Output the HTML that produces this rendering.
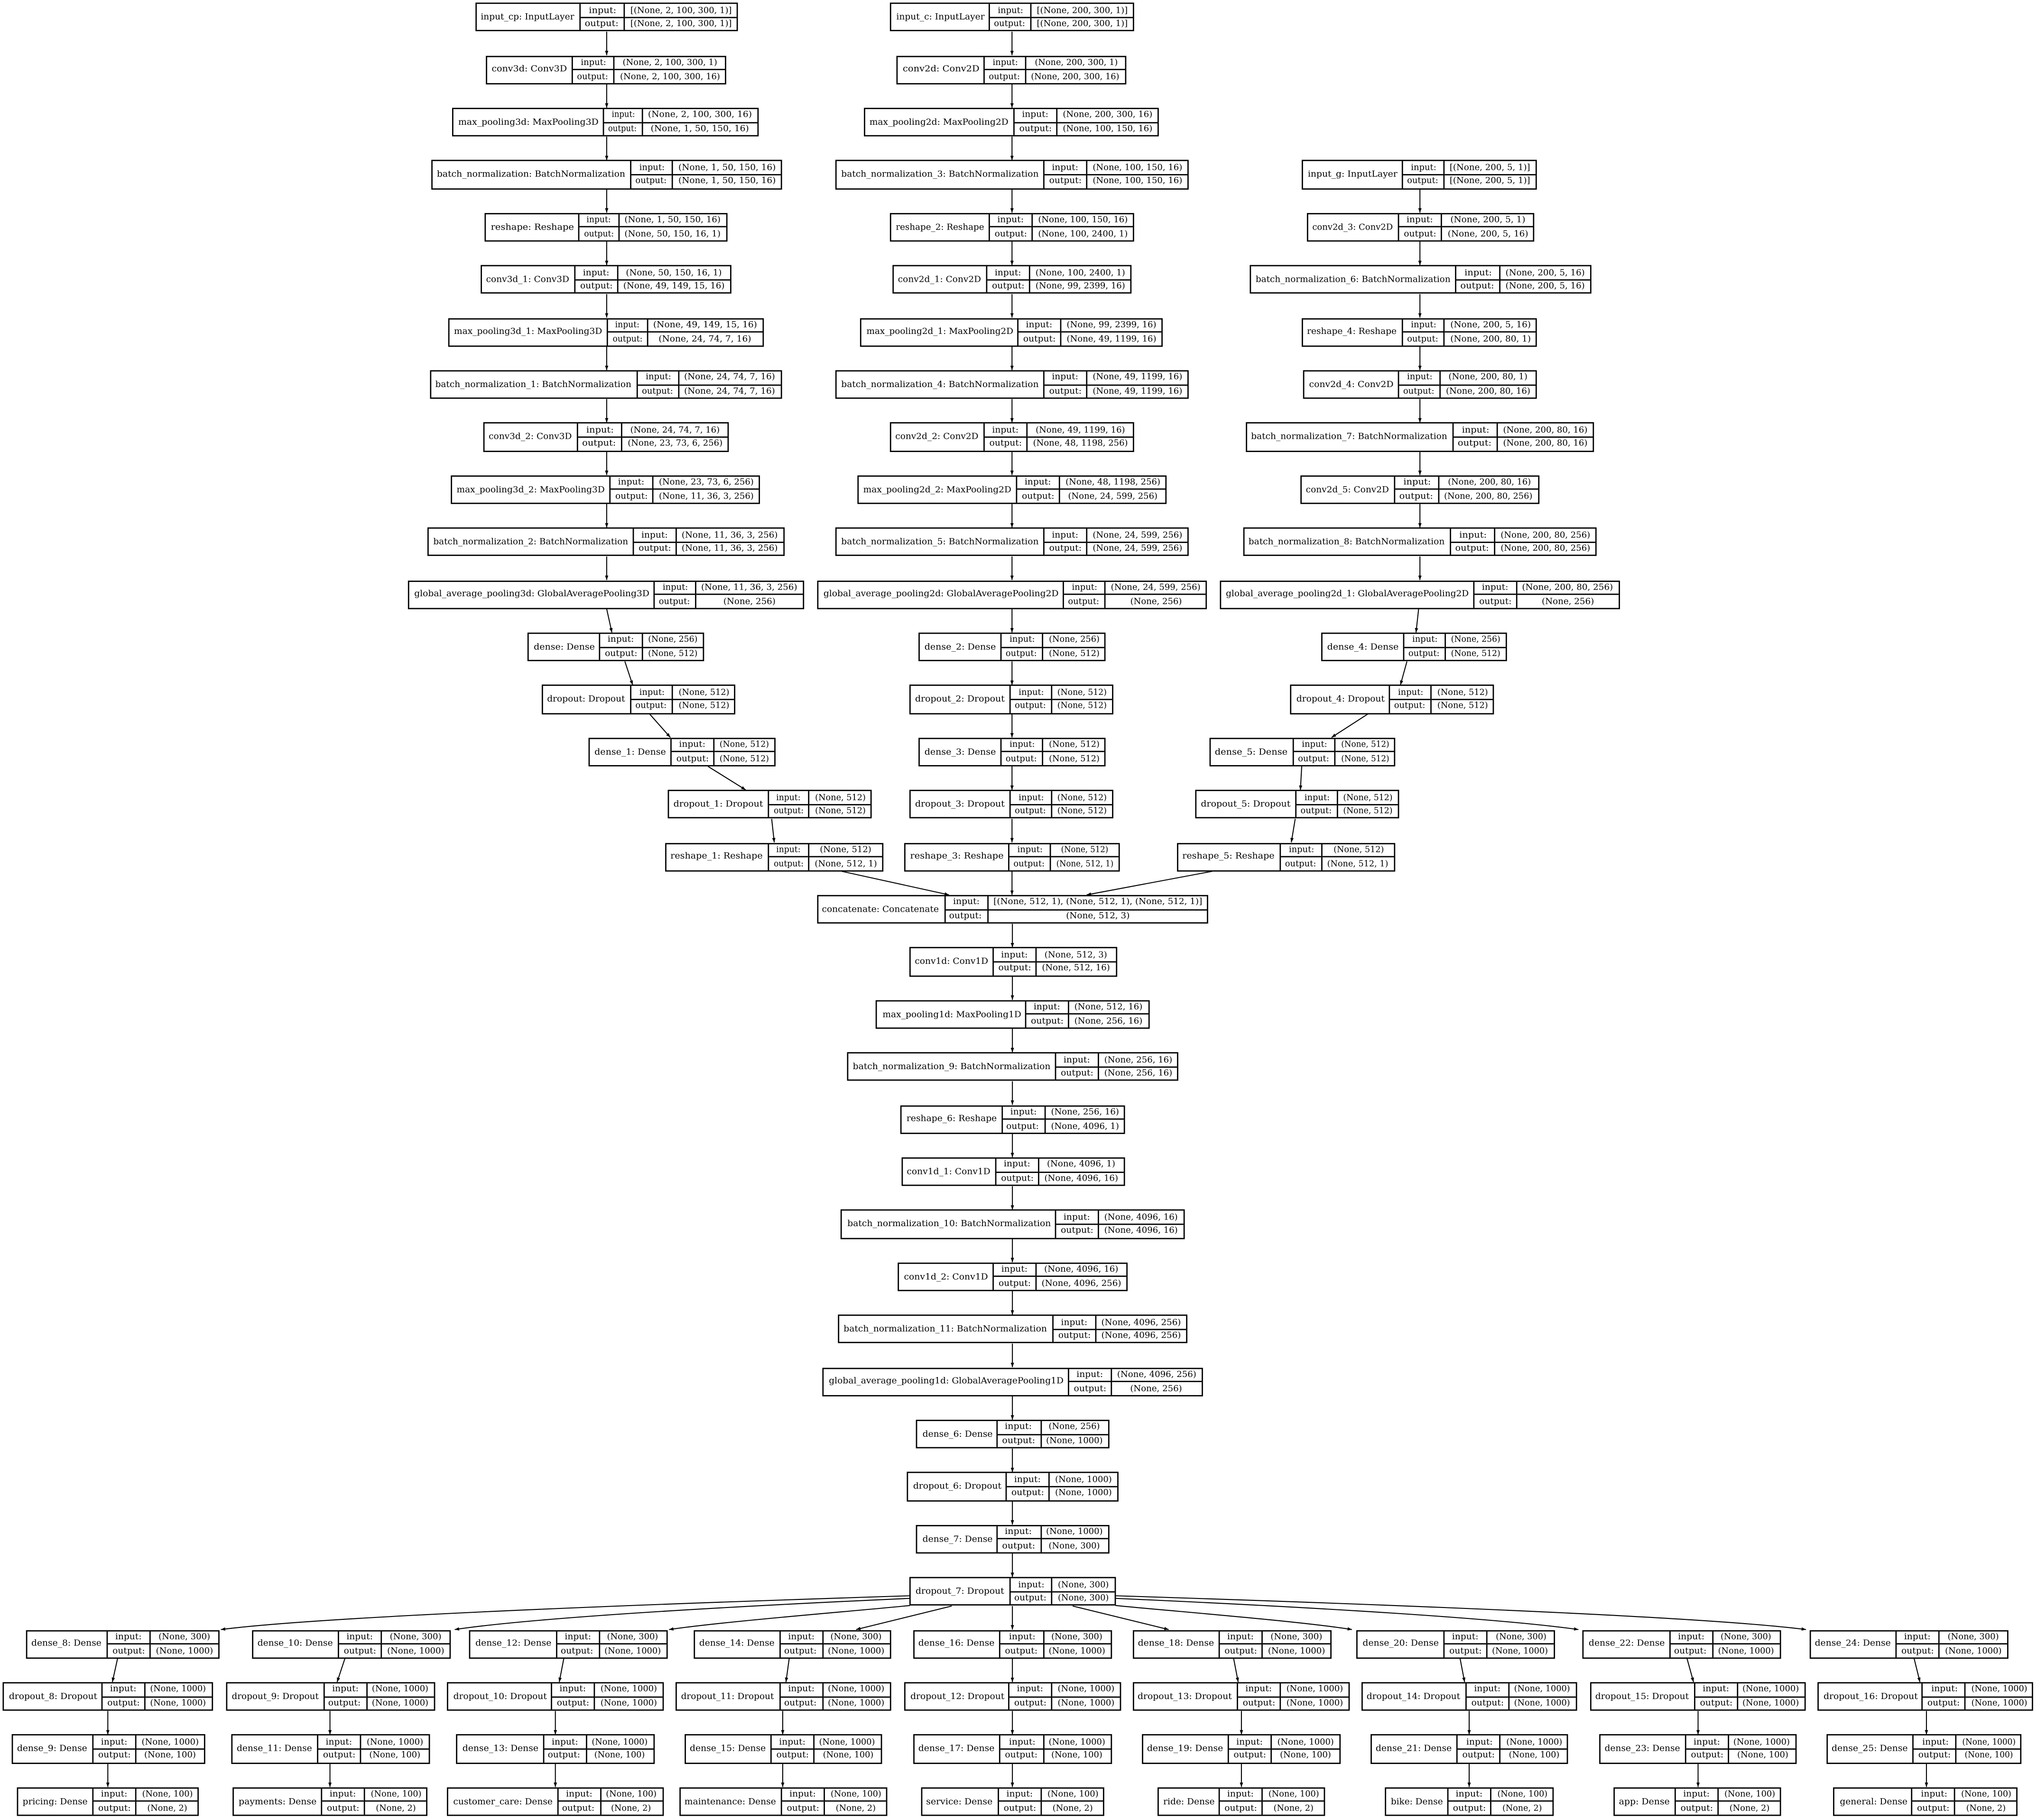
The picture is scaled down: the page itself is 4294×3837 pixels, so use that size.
<!DOCTYPE html>
<html><head><meta charset="utf-8">
<style>
*{box-sizing:border-box;margin:0;padding:0}
html,body{width:4294px;height:3836px;overflow:hidden;background:#fff}
#w{position:absolute;left:0;top:0;width:1568px;height:1401px;transform:scale(2.73852);transform-origin:0 0}
.b{position:absolute;height:22.3px;display:flex;border:.9px solid #000;background:#fff;font:6.6px "DejaVu Serif","Liberation Serif",serif;white-space:nowrap;color:#000;line-height:1}
.n{display:flex;align-items:center;justify-content:center;border-right:.9px solid #000;overflow:visible}
.c{display:flex;flex-direction:column;border-right:.9px solid #000}
.v{flex:1;display:flex;flex-direction:column}
.h{flex:1;display:flex;align-items:center;justify-content:center}
.h+.h{border-top:.9px solid #000}
span{display:inline-block}
svg{position:absolute;left:0;top:0}
</style></head><body><div id="w">
<!-- LEFT COLUMN -->
<div class=b style="left:366px;top:2.1px;width:202px"><div class=n style="width:80px"><span>input_cp: InputLayer</span></div><div class=c style="width:34px"><div class=h><span>input:</span></div><div class=h><span>output:</span></div></div><div class=v><div class=h><span>[(None, 2, 100, 300, 1)]</span></div><div class=h><span>[(None, 2, 100, 300, 1)]</span></div></div></div>
<div class=b style="left:374px;top:42.5px;width:185px"><div class=n style="width:66px"><span>conv3d: Conv3D</span></div><div class=c style="width:32px"><div class=h><span>input:</span></div><div class=h><span>output:</span></div></div><div class=v><div class=h><span>(None, 2, 100, 300, 1)</span></div><div class=h><span>(None, 2, 100, 300, 16)</span></div></div></div>
<div class=b style="left:348px;top:82.9px;width:236px"><div class=n style="width:116px"><span>max_pooling3d: MaxPooling3D</span></div><div class=c style="width:30px"><div class=h><span>input:</span></div><div class=h><span>output:</span></div></div><div class=v><div class=h><span>(None, 2, 100, 300, 16)</span></div><div class=h><span>(None, 1, 50, 150, 16)</span></div></div></div>
<div class=b style="left:332px;top:123.3px;width:270px"><div class=n style="width:153px"><span>batch_normalization: BatchNormalization</span></div><div class=c style="width:32px"><div class=h><span>input:</span></div><div class=h><span>output:</span></div></div><div class=v><div class=h><span>(None, 1, 50, 150, 16)</span></div><div class=h><span>(None, 1, 50, 150, 16)</span></div></div></div>
<div class=b style="left:373px;top:163.7px;width:187px"><div class=n style="width:72px"><span>reshape: Reshape</span></div><div class=c style="width:31px"><div class=h><span>input:</span></div><div class=h><span>output:</span></div></div><div class=v><div class=h><span>(None, 1, 50, 150, 16)</span></div><div class=h><span>(None, 50, 150, 16, 1)</span></div></div></div>
<div class=b style="left:370px;top:204.1px;width:193px"><div class=n style="width:72px"><span>conv3d_1: Conv3D</span></div><div class=c style="width:33px"><div class=h><span>input:</span></div><div class=h><span>output:</span></div></div><div class=v><div class=h><span>(None, 50, 150, 16, 1)</span></div><div class=h><span>(None, 49, 149, 15, 16)</span></div></div></div>
<div class=b style="left:345px;top:244.5px;width:243px"><div class=n style="width:122px"><span>max_pooling3d_1: MaxPooling3D</span></div><div class=c style="width:31px"><div class=h><span>input:</span></div><div class=h><span>output:</span></div></div><div class=v><div class=h><span>(None, 49, 149, 15, 16)</span></div><div class=h><span>(None, 24, 74, 7, 16)</span></div></div></div>
<div class=b style="left:331px;top:284.9px;width:271px"><div class=n style="width:159px"><span>batch_normalization_1: BatchNormalization</span></div><div class=c style="width:32px"><div class=h><span>input:</span></div><div class=h><span>output:</span></div></div><div class=v><div class=h><span>(None, 24, 74, 7, 16)</span></div><div class=h><span>(None, 24, 74, 7, 16)</span></div></div></div>
<div class=b style="left:372px;top:325.3px;width:189px"><div class=n style="width:72px"><span>conv3d_2: Conv3D</span></div><div class=c style="width:34px"><div class=h><span>input:</span></div><div class=h><span>output:</span></div></div><div class=v><div class=h><span>(None, 24, 74, 7, 16)</span></div><div class=h><span>(None, 23, 73, 6, 256)</span></div></div></div>
<div class=b style="left:347px;top:365.7px;width:238px"><div class=n style="width:122px"><span>max_pooling3d_2: MaxPooling3D</span></div><div class=c style="width:33px"><div class=h><span>input:</span></div><div class=h><span>output:</span></div></div><div class=v><div class=h><span>(None, 23, 73, 6, 256)</span></div><div class=h><span>(None, 11, 36, 3, 256)</span></div></div></div>
<div class=b style="left:329px;top:406.1px;width:275px"><div class=n style="width:158px"><span>batch_normalization_2: BatchNormalization</span></div><div class=c style="width:33px"><div class=h><span>input:</span></div><div class=h><span>output:</span></div></div><div class=v><div class=h><span>(None, 11, 36, 3, 256)</span></div><div class=h><span>(None, 11, 36, 3, 256)</span></div></div></div>
<div class=b style="left:314px;top:446.5px;width:305px"><div class=n style="width:189px"><span>global_average_pooling3d: GlobalAveragePooling3D</span></div><div class=c style="width:32px"><div class=h><span>input:</span></div><div class=h><span>output:</span></div></div><div class=v><div class=h><span>(None, 11, 36, 3, 256)</span></div><div class=h><span>(None, 256)</span></div></div></div>
<div class=b style="left:406px;top:486.9px;width:136px"><div class=n style="width:55px"><span>dense: Dense</span></div><div class=c style="width:33px"><div class=h><span>input:</span></div><div class=h><span>output:</span></div></div><div class=v><div class=h><span>(None, 256)</span></div><div class=h><span>(None, 512)</span></div></div></div>
<div class=b style="left:417px;top:527.3px;width:149px"><div class=n style="width:68px"><span>dropout: Dropout</span></div><div class=c style="width:32px"><div class=h><span>input:</span></div><div class=h><span>output:</span></div></div><div class=v><div class=h><span>(None, 512)</span></div><div class=h><span>(None, 512)</span></div></div></div>
<div class=b style="left:453px;top:567.7px;width:144px"><div class=n style="width:63px"><span>dense_1: Dense</span></div><div class=c style="width:33px"><div class=h><span>input:</span></div><div class=h><span>output:</span></div></div><div class=v><div class=h><span>(None, 512)</span></div><div class=h><span>(None, 512)</span></div></div></div>
<div class=b style="left:514px;top:608.1px;width:157px"><div class=n style="width:77px"><span>dropout_1: Dropout</span></div><div class=c style="width:31px"><div class=h><span>input:</span></div><div class=h><span>output:</span></div></div><div class=v><div class=h><span>(None, 512)</span></div><div class=h><span>(None, 512)</span></div></div></div>
<div class=b style="left:512px;top:648.5px;width:168px"><div class=n style="width:79px"><span>reshape_1: Reshape</span></div><div class=c style="width:31px"><div class=h><span>input:</span></div><div class=h><span>output:</span></div></div><div class=v><div class=h><span>(None, 512)</span></div><div class=h><span>(None, 512, 1)</span></div></div></div>
<!-- CENTER COLUMN -->
<div class=b style="left:685px;top:2.1px;width:188px"><div class=n style="width:76px"><span>input_c: InputLayer</span></div><div class=c style="width:32px"><div class=h><span>input:</span></div><div class=h><span>output:</span></div></div><div class=v><div class=h><span>[(None, 200, 300, 1)]</span></div><div class=h><span>[(None, 200, 300, 1)]</span></div></div></div>
<div class=b style="left:690px;top:42.5px;width:177px"><div class=n style="width:67px"><span>conv2d: Conv2D</span></div><div class=c style="width:32px"><div class=h><span>input:</span></div><div class=h><span>output:</span></div></div><div class=v><div class=h><span>(None, 200, 300, 1)</span></div><div class=h><span>(None, 200, 300, 16)</span></div></div></div>
<div class=b style="left:665px;top:82.9px;width:227px"><div class=n style="width:115px"><span>max_pooling2d: MaxPooling2D</span></div><div class=c style="width:33px"><div class=h><span>input:</span></div><div class=h><span>output:</span></div></div><div class=v><div class=h><span>(None, 200, 300, 16)</span></div><div class=h><span>(None, 100, 150, 16)</span></div></div></div>
<div class=b style="left:643px;top:123.3px;width:272px"><div class=n style="width:160px"><span>batch_normalization_3: BatchNormalization</span></div><div class=c style="width:33px"><div class=h><span>input:</span></div><div class=h><span>output:</span></div></div><div class=v><div class=h><span>(None, 100, 150, 16)</span></div><div class=h><span>(None, 100, 150, 16)</span></div></div></div>
<div class=b style="left:685px;top:163.7px;width:188px"><div class=n style="width:76px"><span>reshape_2: Reshape</span></div><div class=c style="width:33px"><div class=h><span>input:</span></div><div class=h><span>output:</span></div></div><div class=v><div class=h><span>(None, 100, 150, 16)</span></div><div class=h><span>(None, 100, 2400, 1)</span></div></div></div>
<div class=b style="left:687px;top:204.1px;width:184px"><div class=n style="width:72px"><span>conv2d_1: Conv2D</span></div><div class=c style="width:33px"><div class=h><span>input:</span></div><div class=h><span>output:</span></div></div><div class=v><div class=h><span>(None, 100, 2400, 1)</span></div><div class=h><span>(None, 99, 2399, 16)</span></div></div></div>
<div class=b style="left:662px;top:244.5px;width:233px"><div class=n style="width:121px"><span>max_pooling2d_1: MaxPooling2D</span></div><div class=c style="width:33px"><div class=h><span>input:</span></div><div class=h><span>output:</span></div></div><div class=v><div class=h><span>(None, 99, 2399, 16)</span></div><div class=h><span>(None, 49, 1199, 16)</span></div></div></div>
<div class=b style="left:643px;top:284.9px;width:272px"><div class=n style="width:160px"><span>batch_normalization_4: BatchNormalization</span></div><div class=c style="width:33px"><div class=h><span>input:</span></div><div class=h><span>output:</span></div></div><div class=v><div class=h><span>(None, 49, 1199, 16)</span></div><div class=h><span>(None, 49, 1199, 16)</span></div></div></div>
<div class=b style="left:685px;top:325.3px;width:188px"><div class=n style="width:72px"><span>conv2d_2: Conv2D</span></div><div class=c style="width:33px"><div class=h><span>input:</span></div><div class=h><span>output:</span></div></div><div class=v><div class=h><span>(None, 49, 1199, 16)</span></div><div class=h><span>(None, 48, 1198, 256)</span></div></div></div>
<div class=b style="left:660px;top:365.7px;width:238px"><div class=n style="width:122px"><span>max_pooling2d_2: MaxPooling2D</span></div><div class=c style="width:33px"><div class=h><span>input:</span></div><div class=h><span>output:</span></div></div><div class=v><div class=h><span>(None, 48, 1198, 256)</span></div><div class=h><span>(None, 24, 599, 256)</span></div></div></div>
<div class=b style="left:643px;top:406.1px;width:272px"><div class=n style="width:160px"><span>batch_normalization_5: BatchNormalization</span></div><div class=c style="width:33px"><div class=h><span>input:</span></div><div class=h><span>output:</span></div></div><div class=v><div class=h><span>(None, 24, 599, 256)</span></div><div class=h><span>(None, 24, 599, 256)</span></div></div></div>
<div class=b style="left:629px;top:446.5px;width:300px"><div class=n style="width:189px"><span>global_average_pooling2d: GlobalAveragePooling2D</span></div><div class=c style="width:32px"><div class=h><span>input:</span></div><div class=h><span>output:</span></div></div><div class=v><div class=h><span>(None, 24, 599, 256)</span></div><div class=h><span>(None, 256)</span></div></div></div>
<div class=b style="left:707px;top:486.9px;width:144px"><div class=n style="width:63px"><span>dense_2: Dense</span></div><div class=c style="width:32px"><div class=h><span>input:</span></div><div class=h><span>output:</span></div></div><div class=v><div class=h><span>(None, 256)</span></div><div class=h><span>(None, 512)</span></div></div></div>
<div class=b style="left:700px;top:527.3px;width:157px"><div class=n style="width:77px"><span>dropout_2: Dropout</span></div><div class=c style="width:32px"><div class=h><span>input:</span></div><div class=h><span>output:</span></div></div><div class=v><div class=h><span>(None, 512)</span></div><div class=h><span>(None, 512)</span></div></div></div>
<div class=b style="left:707px;top:567.7px;width:144px"><div class=n style="width:63px"><span>dense_3: Dense</span></div><div class=c style="width:32px"><div class=h><span>input:</span></div><div class=h><span>output:</span></div></div><div class=v><div class=h><span>(None, 512)</span></div><div class=h><span>(None, 512)</span></div></div></div>
<div class=b style="left:700px;top:608.1px;width:157px"><div class=n style="width:77px"><span>dropout_3: Dropout</span></div><div class=c style="width:32px"><div class=h><span>input:</span></div><div class=h><span>output:</span></div></div><div class=v><div class=h><span>(None, 512)</span></div><div class=h><span>(None, 512)</span></div></div></div>
<div class=b style="left:696px;top:648.5px;width:166px"><div class=n style="width:80px"><span>reshape_3: Reshape</span></div><div class=c style="width:32px"><div class=h><span>input:</span></div><div class=h><span>output:</span></div></div><div class=v><div class=h><span>(None, 512)</span></div><div class=h><span>(None, 512, 1)</span></div></div></div>
<div class=b style="left:628.5px;top:688.9px;width:301.8px"><div class=n style="width:98px"><span>concatenate: Concatenate</span></div><div class=c style="width:33.1px"><div class=h><span>input:</span></div><div class=h><span>output:</span></div></div><div class=v><div class=h><span>[(None, 512, 1), (None, 512, 1), (None, 512, 1)]</span></div><div class=h><span>(None, 512, 3)</span></div></div></div>
<div class=b style="left:699.5px;top:729.3px;width:160.2px"><div class=n style="width:64.5px"><span>conv1d: Conv1D</span></div><div class=c style="width:33.3px"><div class=h><span>input:</span></div><div class=h><span>output:</span></div></div><div class=v><div class=h><span>(None, 512, 3)</span></div><div class=h><span>(None, 512, 16)</span></div></div></div>
<div class=b style="left:674.4px;top:769.7px;width:210.3px"><div class=n style="width:114.8px"><span>max_pooling1d: MaxPooling1D</span></div><div class=c style="width:33.1px"><div class=h><span>input:</span></div><div class=h><span>output:</span></div></div><div class=v><div class=h><span>(None, 512, 16)</span></div><div class=h><span>(None, 256, 16)</span></div></div></div>
<div class=b style="left:651.8px;top:810.1px;width:255.7px"><div class=n style="width:160.2px"><span>batch_normalization_9: BatchNormalization</span></div><div class=c style="width:33.1px"><div class=h><span>input:</span></div><div class=h><span>output:</span></div></div><div class=v><div class=h><span>(None, 256, 16)</span></div><div class=h><span>(None, 256, 16)</span></div></div></div>
<div class=b style="left:693px;top:850.5px;width:173px"><div class=n style="width:77.5px"><span>reshape_6: Reshape</span></div><div class=c style="width:33.1px"><div class=h><span>input:</span></div><div class=h><span>output:</span></div></div><div class=v><div class=h><span>(None, 256, 16)</span></div><div class=h><span>(None, 4096, 1)</span></div></div></div>
<div class=b style="left:693.5px;top:890.9px;width:172.3px"><div class=n style="width:72.4px"><span>conv1d_1: Conv1D</span></div><div class=c style="width:33.1px"><div class=h><span>input:</span></div><div class=h><span>output:</span></div></div><div class=v><div class=h><span>(None, 4096, 1)</span></div><div class=h><span>(None, 4096, 16)</span></div></div></div>
<div class=b style="left:647.3px;top:931.3px;width:264.4px"><div class=n style="width:164.7px"><span>batch_normalization_10: BatchNormalization</span></div><div class=c style="width:33.1px"><div class=h><span>input:</span></div><div class=h><span>output:</span></div></div><div class=v><div class=h><span>(None, 4096, 16)</span></div><div class=h><span>(None, 4096, 16)</span></div></div></div>
<div class=b style="left:691.1px;top:971.7px;width:176.8px"><div class=n style="width:72.7px"><span>conv1d_2: Conv1D</span></div><div class=c style="width:32.8px"><div class=h><span>input:</span></div><div class=h><span>output:</span></div></div><div class=v><div class=h><span>(None, 4096, 16)</span></div><div class=h><span>(None, 4096, 256)</span></div></div></div>
<div class=b style="left:645.2px;top:1012.1px;width:268.8px"><div class=n style="width:164.5px"><span>batch_normalization_11: BatchNormalization</span></div><div class=c style="width:33px"><div class=h><span>input:</span></div><div class=h><span>output:</span></div></div><div class=v><div class=h><span>(None, 4096, 256)</span></div><div class=h><span>(None, 4096, 256)</span></div></div></div>
<div class=b style="left:633.1px;top:1052.5px;width:292.8px"><div class=n style="width:188.7px"><span>global_average_pooling1d: GlobalAveragePooling1D</span></div><div class=c style="width:33.1px"><div class=h><span>input:</span></div><div class=h><span>output:</span></div></div><div class=v><div class=h><span>(None, 4096, 256)</span></div><div class=h><span>(None, 256)</span></div></div></div>
<div class=b style="left:705.1px;top:1092.9px;width:149.1px"><div class=n style="width:62px"><span>dense_6: Dense</span></div><div class=c style="width:33.5px"><div class=h><span>input:</span></div><div class=h><span>output:</span></div></div><div class=v><div class=h><span>(None, 256)</span></div><div class=h><span>(None, 1000)</span></div></div></div>
<div class=b style="left:698.1px;top:1133.3px;width:162.9px"><div class=n style="width:76px"><span>dropout_6: Dropout</span></div><div class=c style="width:33.2px"><div class=h><span>input:</span></div><div class=h><span>output:</span></div></div><div class=v><div class=h><span>(None, 1000)</span></div><div class=h><span>(None, 1000)</span></div></div></div>
<div class=b style="left:705.1px;top:1173.7px;width:149.1px"><div class=n style="width:62px"><span>dense_7: Dense</span></div><div class=c style="width:33.5px"><div class=h><span>input:</span></div><div class=h><span>output:</span></div></div><div class=v><div class=h><span>(None, 1000)</span></div><div class=h><span>(None, 300)</span></div></div></div>
<div class=b style="left:700.4px;top:1214.1px;width:158.2px"><div class=n style="width:76.2px"><span>dropout_7: Dropout</span></div><div class=c style="width:32.8px"><div class=h><span>input:</span></div><div class=h><span>output:</span></div></div><div class=v><div class=h><span>(None, 300)</span></div><div class=h><span>(None, 300)</span></div></div></div>
<!-- RIGHT COLUMN -->
<div class=b style="left:1002px;top:123.3px;width:181px"><div class=n style="width:77px"><span>input_g: InputLayer</span></div><div class=c style="width:32px"><div class=h><span>input:</span></div><div class=h><span>output:</span></div></div><div class=v><div class=h><span>[(None, 200, 5, 1)]</span></div><div class=h><span>[(None, 200, 5, 1)]</span></div></div></div>
<div class=b style="left:1006px;top:163.7px;width:175px"><div class=n style="width:70px"><span>conv2d_3: Conv2D</span></div><div class=c style="width:33px"><div class=h><span>input:</span></div><div class=h><span>output:</span></div></div><div class=v><div class=h><span>(None, 200, 5, 1)</span></div><div class=h><span>(None, 200, 5, 16)</span></div></div></div>
<div class=b style="left:962px;top:204.1px;width:263px"><div class=n style="width:158px"><span>batch_normalization_6: BatchNormalization</span></div><div class=c style="width:34px"><div class=h><span>input:</span></div><div class=h><span>output:</span></div></div><div class=v><div class=h><span>(None, 200, 5, 16)</span></div><div class=h><span>(None, 200, 5, 16)</span></div></div></div>
<div class=b style="left:1002px;top:244.5px;width:181px"><div class=n style="width:77px"><span>reshape_4: Reshape</span></div><div class=c style="width:32px"><div class=h><span>input:</span></div><div class=h><span>output:</span></div></div><div class=v><div class=h><span>(None, 200, 5, 16)</span></div><div class=h><span>(None, 200, 80, 1)</span></div></div></div>
<div class=b style="left:1003px;top:284.9px;width:180px"><div class=n style="width:73px"><span>conv2d_4: Conv2D</span></div><div class=c style="width:32px"><div class=h><span>input:</span></div><div class=h><span>output:</span></div></div><div class=v><div class=h><span>(None, 200, 80, 1)</span></div><div class=h><span>(None, 200, 80, 16)</span></div></div></div>
<div class=b style="left:959px;top:325.3px;width:268px"><div class=n style="width:159px"><span>batch_normalization_7: BatchNormalization</span></div><div class=c style="width:34px"><div class=h><span>input:</span></div><div class=h><span>output:</span></div></div><div class=v><div class=h><span>(None, 200, 80, 16)</span></div><div class=h><span>(None, 200, 80, 16)</span></div></div></div>
<div class=b style="left:1001px;top:365.7px;width:184px"><div class=n style="width:72px"><span>conv2d_5: Conv2D</span></div><div class=c style="width:34px"><div class=h><span>input:</span></div><div class=h><span>output:</span></div></div><div class=v><div class=h><span>(None, 200, 80, 16)</span></div><div class=h><span>(None, 200, 80, 256)</span></div></div></div>
<div class=b style="left:957px;top:406.1px;width:272px"><div class=n style="width:159px"><span>batch_normalization_8: BatchNormalization</span></div><div class=c style="width:34px"><div class=h><span>input:</span></div><div class=h><span>output:</span></div></div><div class=v><div class=h><span>(None, 200, 80, 256)</span></div><div class=h><span>(None, 200, 80, 256)</span></div></div></div>
<div class=b style="left:939px;top:446.5px;width:308px"><div class=n style="width:195px"><span>global_average_pooling2d_1: GlobalAveragePooling2D</span></div><div class=c style="width:33px"><div class=h><span>input:</span></div><div class=h><span>output:</span></div></div><div class=v><div class=h><span>(None, 200, 80, 256)</span></div><div class=h><span>(None, 256)</span></div></div></div>
<div class=b style="left:1017px;top:486.9px;width:143px"><div class=n style="width:63px"><span>dense_4: Dense</span></div><div class=c style="width:32px"><div class=h><span>input:</span></div><div class=h><span>output:</span></div></div><div class=v><div class=h><span>(None, 256)</span></div><div class=h><span>(None, 512)</span></div></div></div>
<div class=b style="left:993px;top:527.3px;width:157px"><div class=n style="width:76px"><span>dropout_4: Dropout</span></div><div class=c style="width:32px"><div class=h><span>input:</span></div><div class=h><span>output:</span></div></div><div class=v><div class=h><span>(None, 512)</span></div><div class=h><span>(None, 512)</span></div></div></div>
<div class=b style="left:931px;top:567.7px;width:143px"><div class=n style="width:64px"><span>dense_5: Dense</span></div><div class=c style="width:32px"><div class=h><span>input:</span></div><div class=h><span>output:</span></div></div><div class=v><div class=h><span>(None, 512)</span></div><div class=h><span>(None, 512)</span></div></div></div>
<div class=b style="left:920px;top:608.1px;width:157px"><div class=n style="width:77px"><span>dropout_5: Dropout</span></div><div class=c style="width:32px"><div class=h><span>input:</span></div><div class=h><span>output:</span></div></div><div class=v><div class=h><span>(None, 512)</span></div><div class=h><span>(None, 512)</span></div></div></div>
<div class=b style="left:906px;top:648.5px;width:168px"><div class=n style="width:79px"><span>reshape_5: Reshape</span></div><div class=c style="width:32px"><div class=h><span>input:</span></div><div class=h><span>output:</span></div></div><div class=v><div class=h><span>(None, 512)</span></div><div class=h><span>(None, 512, 1)</span></div></div></div>
<!-- BOTTOM ROWS -->
<div class=b style="left:20px;top:1254.5px;width:149px"><div class=n style="width:62px"><span>dense_8: Dense</span></div><div class=c style="width:33px"><div class=h><span>input:</span></div><div class=h><span>output:</span></div></div><div class=v><div class=h><span>(None, 300)</span></div><div class=h><span>(None, 1000)</span></div></div></div>
<div class=b style="left:2px;top:1294.9px;width:162px"><div class=n style="width:76px"><span>dropout_8: Dropout</span></div><div class=c style="width:33px"><div class=h><span>input:</span></div><div class=h><span>output:</span></div></div><div class=v><div class=h><span>(None, 1000)</span></div><div class=h><span>(None, 1000)</span></div></div></div>
<div class=b style="left:9px;top:1335.3px;width:149px"><div class=n style="width:62px"><span>dense_9: Dense</span></div><div class=c style="width:33px"><div class=h><span>input:</span></div><div class=h><span>output:</span></div></div><div class=v><div class=h><span>(None, 1000)</span></div><div class=h><span>(None, 100)</span></div></div></div>
<div class=b style="left:13px;top:1375.7px;width:140px"><div class=n style="width:58px"><span>pricing: Dense</span></div><div class=c style="width:33px"><div class=h><span>input:</span></div><div class=h><span>output:</span></div></div><div class=v><div class=h><span>(None, 100)</span></div><div class=h><span>(None, 2)</span></div></div></div>

<div class=b style="left:194px;top:1254.5px;width:153px"><div class=n style="width:66px"><span>dense_10: Dense</span></div><div class=c style="width:33px"><div class=h><span>input:</span></div><div class=h><span>output:</span></div></div><div class=v><div class=h><span>(None, 300)</span></div><div class=h><span>(None, 1000)</span></div></div></div>
<div class=b style="left:173.5px;top:1294.9px;width:161.5px"><div class=n style="width:75px"><span>dropout_9: Dropout</span></div><div class=c style="width:33px"><div class=h><span>input:</span></div><div class=h><span>output:</span></div></div><div class=v><div class=h><span>(None, 1000)</span></div><div class=h><span>(None, 1000)</span></div></div></div>
<div class=b style="left:178px;top:1335.3px;width:152.5px"><div class=n style="width:66px"><span>dense_11: Dense</span></div><div class=c style="width:33px"><div class=h><span>input:</span></div><div class=h><span>output:</span></div></div><div class=v><div class=h><span>(None, 1000)</span></div><div class=h><span>(None, 100)</span></div></div></div>
<div class=b style="left:179px;top:1375.7px;width:150px"><div class=n style="width:68px"><span>payments: Dense</span></div><div class=c style="width:33px"><div class=h><span>input:</span></div><div class=h><span>output:</span></div></div><div class=v><div class=h><span>(None, 100)</span></div><div class=h><span>(None, 2)</span></div></div></div>

<div class=b style="left:361px;top:1254.5px;width:153px"><div class=n style="width:66.5px"><span>dense_12: Dense</span></div><div class=c style="width:33px"><div class=h><span>input:</span></div><div class=h><span>output:</span></div></div><div class=v><div class=h><span>(None, 300)</span></div><div class=h><span>(None, 1000)</span></div></div></div>
<div class=b style="left:344px;top:1294.9px;width:166.5px"><div class=n style="width:80px"><span>dropout_10: Dropout</span></div><div class=c style="width:33px"><div class=h><span>input:</span></div><div class=h><span>output:</span></div></div><div class=v><div class=h><span>(None, 1000)</span></div><div class=h><span>(None, 1000)</span></div></div></div>
<div class=b style="left:351px;top:1335.3px;width:152.5px"><div class=n style="width:66.5px"><span>dense_13: Dense</span></div><div class=c style="width:33px"><div class=h><span>input:</span></div><div class=h><span>output:</span></div></div><div class=v><div class=h><span>(None, 1000)</span></div><div class=h><span>(None, 100)</span></div></div></div>
<div class=b style="left:344px;top:1375.7px;width:166.5px"><div class=n style="width:84.5px"><span>customer_care: Dense</span></div><div class=c style="width:33px"><div class=h><span>input:</span></div><div class=h><span>output:</span></div></div><div class=v><div class=h><span>(None, 100)</span></div><div class=h><span>(None, 2)</span></div></div></div>

<div class=b style="left:533.5px;top:1254.5px;width:152.5px"><div class=n style="width:66px"><span>dense_14: Dense</span></div><div class=c style="width:33px"><div class=h><span>input:</span></div><div class=h><span>output:</span></div></div><div class=v><div class=h><span>(None, 300)</span></div><div class=h><span>(None, 1000)</span></div></div></div>
<div class=b style="left:520px;top:1294.9px;width:166px"><div class=n style="width:79.5px"><span>dropout_11: Dropout</span></div><div class=c style="width:33px"><div class=h><span>input:</span></div><div class=h><span>output:</span></div></div><div class=v><div class=h><span>(None, 1000)</span></div><div class=h><span>(None, 1000)</span></div></div></div>
<div class=b style="left:526.5px;top:1335.3px;width:152.5px"><div class=n style="width:66.5px"><span>dense_15: Dense</span></div><div class=c style="width:33px"><div class=h><span>input:</span></div><div class=h><span>output:</span></div></div><div class=v><div class=h><span>(None, 1000)</span></div><div class=h><span>(None, 100)</span></div></div></div>
<div class=b style="left:522.5px;top:1375.7px;width:160.5px"><div class=n style="width:78.5px"><span>maintenance: Dense</span></div><div class=c style="width:33px"><div class=h><span>input:</span></div><div class=h><span>output:</span></div></div><div class=v><div class=h><span>(None, 100)</span></div><div class=h><span>(None, 2)</span></div></div></div>

<div class=b style="left:702.8px;top:1254.5px;width:153.3px"><div class=n style="width:66.7px"><span>dense_16: Dense</span></div><div class=c style="width:33.1px"><div class=h><span>input:</span></div><div class=h><span>output:</span></div></div><div class=v><div class=h><span>(None, 300)</span></div><div class=h><span>(None, 1000)</span></div></div></div>
<div class=b style="left:696px;top:1294.9px;width:167px"><div class=n style="width:80.4px"><span>dropout_12: Dropout</span></div><div class=c style="width:32.9px"><div class=h><span>input:</span></div><div class=h><span>output:</span></div></div><div class=v><div class=h><span>(None, 1000)</span></div><div class=h><span>(None, 1000)</span></div></div></div>
<div class=b style="left:702.8px;top:1335.3px;width:153.3px"><div class=n style="width:66.7px"><span>dense_17: Dense</span></div><div class=c style="width:33.1px"><div class=h><span>input:</span></div><div class=h><span>output:</span></div></div><div class=v><div class=h><span>(None, 1000)</span></div><div class=h><span>(None, 100)</span></div></div></div>
<div class=b style="left:708.7px;top:1375.7px;width:141.4px"><div class=n style="width:59.1px"><span>service: Dense</span></div><div class=c style="width:33px"><div class=h><span>input:</span></div><div class=h><span>output:</span></div></div><div class=v><div class=h><span>(None, 100)</span></div><div class=h><span>(None, 2)</span></div></div></div>

<div class=b style="left:871.5px;top:1254.5px;width:153.7px"><div class=n style="width:66.6px"><span>dense_18: Dense</span></div><div class=c style="width:33.1px"><div class=h><span>input:</span></div><div class=h><span>output:</span></div></div><div class=v><div class=h><span>(None, 300)</span></div><div class=h><span>(None, 1000)</span></div></div></div>
<div class=b style="left:871.5px;top:1294.9px;width:167.3px"><div class=n style="width:80.6px"><span>dropout_13: Dropout</span></div><div class=c style="width:33.1px"><div class=h><span>input:</span></div><div class=h><span>output:</span></div></div><div class=v><div class=h><span>(None, 1000)</span></div><div class=h><span>(None, 1000)</span></div></div></div>
<div class=b style="left:878.5px;top:1335.3px;width:153.2px"><div class=n style="width:66.6px"><span>dense_19: Dense</span></div><div class=c style="width:33.1px"><div class=h><span>input:</span></div><div class=h><span>output:</span></div></div><div class=v><div class=h><span>(None, 1000)</span></div><div class=h><span>(None, 100)</span></div></div></div>
<div class=b style="left:890.5px;top:1375.7px;width:129.7px"><div class=n style="width:47.6px"><span>ride: Dense</span></div><div class=c style="width:33.1px"><div class=h><span>input:</span></div><div class=h><span>output:</span></div></div><div class=v><div class=h><span>(None, 100)</span></div><div class=h><span>(None, 2)</span></div></div></div>

<div class=b style="left:1044.3px;top:1254.5px;width:152.7px"><div class=n style="width:66.6px"><span>dense_20: Dense</span></div><div class=c style="width:33px"><div class=h><span>input:</span></div><div class=h><span>output:</span></div></div><div class=v><div class=h><span>(None, 300)</span></div><div class=h><span>(None, 1000)</span></div></div></div>
<div class=b style="left:1047.8px;top:1294.9px;width:166.2px"><div class=n style="width:80.1px"><span>dropout_14: Dropout</span></div><div class=c style="width:33px"><div class=h><span>input:</span></div><div class=h><span>output:</span></div></div><div class=v><div class=h><span>(None, 1000)</span></div><div class=h><span>(None, 1000)</span></div></div></div>
<div class=b style="left:1054.8px;top:1335.3px;width:152.7px"><div class=n style="width:66.6px"><span>dense_21: Dense</span></div><div class=c style="width:33px"><div class=h><span>input:</span></div><div class=h><span>output:</span></div></div><div class=v><div class=h><span>(None, 1000)</span></div><div class=h><span>(None, 100)</span></div></div></div>
<div class=b style="left:1065.8px;top:1375.7px;width:130.2px"><div class=n style="width:48.1px"><span>bike: Dense</span></div><div class=c style="width:33.5px"><div class=h><span>input:</span></div><div class=h><span>output:</span></div></div><div class=v><div class=h><span>(None, 100)</span></div><div class=h><span>(None, 2)</span></div></div></div>

<div class=b style="left:1218px;top:1254.5px;width:152.7px"><div class=n style="width:66.6px"><span>dense_22: Dense</span></div><div class=c style="width:33px"><div class=h><span>input:</span></div><div class=h><span>output:</span></div></div><div class=v><div class=h><span>(None, 300)</span></div><div class=h><span>(None, 1000)</span></div></div></div>
<div class=b style="left:1223.5px;top:1294.9px;width:166.7px"><div class=n style="width:80.1px"><span>dropout_15: Dropout</span></div><div class=c style="width:33.1px"><div class=h><span>input:</span></div><div class=h><span>output:</span></div></div><div class=v><div class=h><span>(None, 1000)</span></div><div class=h><span>(None, 1000)</span></div></div></div>
<div class=b style="left:1230.5px;top:1335.3px;width:152.7px"><div class=n style="width:66.1px"><span>dense_23: Dense</span></div><div class=c style="width:33.1px"><div class=h><span>input:</span></div><div class=h><span>output:</span></div></div><div class=v><div class=h><span>(None, 1000)</span></div><div class=h><span>(None, 100)</span></div></div></div>
<div class=b style="left:1242px;top:1375.7px;width:129.2px"><div class=n style="width:47.1px"><span>app: Dense</span></div><div class=c style="width:33px"><div class=h><span>input:</span></div><div class=h><span>output:</span></div></div><div class=v><div class=h><span>(None, 100)</span></div><div class=h><span>(None, 2)</span></div></div></div>

<div class=b style="left:1392.8px;top:1254.5px;width:153.2px"><div class=n style="width:66.5px"><span>dense_24: Dense</span></div><div class=c style="width:33.1px"><div class=h><span>input:</span></div><div class=h><span>output:</span></div></div><div class=v><div class=h><span>(None, 300)</span></div><div class=h><span>(None, 1000)</span></div></div></div>
<div class=b style="left:1398.8px;top:1294.9px;width:166.7px"><div class=n style="width:80.6px"><span>dropout_16: Dropout</span></div><div class=c style="width:33px"><div class=h><span>input:</span></div><div class=h><span>output:</span></div></div><div class=v><div class=h><span>(None, 1000)</span></div><div class=h><span>(None, 1000)</span></div></div></div>
<div class=b style="left:1405.8px;top:1335.3px;width:150.7px"><div class=n style="width:66.6px"><span>dense_25: Dense</span></div><div class=c style="width:33px"><div class=h><span>input:</span></div><div class=h><span>output:</span></div></div><div class=v><div class=h><span>(None, 1000)</span></div><div class=h><span>(None, 100)</span></div></div></div>
<div class=b style="left:1411.3px;top:1375.7px;width:141.7px"><div class=n style="width:60.1px"><span>general: Dense</span></div><div class=c style="width:33px"><div class=h><span>input:</span></div><div class=h><span>output:</span></div></div><div class=v><div class=h><span>(None, 100)</span></div><div class=h><span>(None, 2)</span></div></div></div>

<svg width="1568" height="1401" viewBox="0 0 1568 1401">
<defs><marker id="a" viewBox="0 0 10 10" refX="10" refY="5" markerWidth="3.4" markerHeight="2.6" orient="auto" markerUnits="userSpaceOnUse" preserveAspectRatio="none"><path d="M0,0L10,5L0,10z" fill="#000"/></marker></defs>
<g fill="none" stroke="#000" stroke-width=".75" marker-end="url(#a)">
<path d="M467 24.4V42.5"/><path d="M467 64.8V82.9"/><path d="M467 105.2V123.3"/><path d="M467 145.6V163.7"/><path d="M467 186V204.1"/><path d="M467 226.4V244.5"/><path d="M467 266.8V284.9"/><path d="M467 307.2V325.3"/><path d="M467 347.6V365.7"/><path d="M467 388V406.1"/><path d="M467 428.4V446.5"/>
<path d="M467 468.8L471 486.9"/><path d="M481 509.2L487 527.3"/><path d="M500 549.6L516 567.7"/><path d="M545 590L574 608.1"/><path d="M594 630.4L596 648.5"/><path d="M648 670.8L730.5 688.9"/>
<path d="M779 24.4V42.5"/><path d="M779 64.8V82.9"/><path d="M779 105.2V123.3"/><path d="M779 145.6V163.7"/><path d="M779 186V204.1"/><path d="M779 226.4V244.5"/><path d="M779 266.8V284.9"/><path d="M779 307.2V325.3"/><path d="M779 347.6V365.7"/><path d="M779 388V406.1"/><path d="M779 428.4V446.5"/><path d="M779 468.8V486.9"/><path d="M779 509.2V527.3"/><path d="M779 549.6V567.7"/><path d="M779 590V608.1"/><path d="M779 630.4V648.5"/><path d="M779 670.8V688.9"/>
<path d="M779.3 711.2V729.3"/><path d="M779.3 751.6V769.7"/><path d="M779.3 792V810.1"/><path d="M779.3 832.4V850.5"/><path d="M779.3 872.8V890.9"/><path d="M779.3 913.2V931.3"/><path d="M779.3 953.6V971.7"/><path d="M779.3 994V1012.1"/><path d="M779.3 1034.4V1052.5"/><path d="M779.3 1074.8V1092.9"/><path d="M779.3 1115.2V1133.3"/><path d="M779.3 1155.6V1173.7"/><path d="M779.3 1196V1214.1"/>
<path d="M1093 145.6V163.7"/><path d="M1093 186V204.1"/><path d="M1093 226.4V244.5"/><path d="M1093 266.8V284.9"/><path d="M1093 307.2V325.3"/><path d="M1093 347.6V365.7"/><path d="M1093 388V406.1"/><path d="M1093 428.4V446.5"/>
<path d="M1092 468.8L1090 486.9"/><path d="M1083 509.2L1078 527.3"/><path d="M1053 549.6L1025 567.7"/><path d="M1002 590L1001 608.1"/><path d="M997 630.4L994 648.5"/><path d="M933 670.8L836.5 688.9"/>
<path d="M700.4 1228.5C560 1233 260 1243 170 1254.5"/>
<path d="M700.4 1230.5C600 1235 420 1244 350 1254.5"/>
<path d="M700.4 1236C650 1241 560 1248 515 1254.5"/>
<path d="M732.6 1236.4L659 1254.5"/>
<path d="M779.3 1236.4V1254.5"/>
<path d="M825.7 1236.4L899.6 1254.5"/>
<path d="M858.6 1236C910 1241 1000 1248 1040.7 1254.5"/>
<path d="M858.6 1230.5C960 1235 1140 1244 1215 1254.5"/>
<path d="M858.6 1228.5C1000 1233 1300 1243 1390.2 1254.5"/>
<path d="M90.5 1276.8L86.5 1294.9"/><path d="M83 1317.2V1335.3"/><path d="M83 1357.6V1375.7"/>
<path d="M265.5 1276.8L259.5 1294.9"/><path d="M254 1317.2V1335.3"/><path d="M254 1357.6V1375.7"/>
<path d="M434 1276.8L430.5 1294.9"/><path d="M427.5 1317.2V1335.3"/><path d="M427.5 1357.6V1375.7"/>
<path d="M607.5 1276.8L605 1294.9"/><path d="M602.5 1317.2V1335.3"/><path d="M602.5 1357.6V1375.7"/>
<path d="M779.3 1276.8V1294.9"/><path d="M779.3 1317.2V1335.3"/><path d="M779.3 1357.6V1375.7"/>
<path d="M949.6 1276.8L953.1 1294.9"/><path d="M955.6 1317.2V1335.3"/><path d="M955.6 1357.6V1375.7"/>
<path d="M1123.9 1276.8L1127.4 1294.9"/><path d="M1130.9 1317.2V1335.3"/><path d="M1130.9 1357.6V1375.7"/>
<path d="M1298.6 1276.8L1303.6 1294.9"/><path d="M1307.1 1317.2V1335.3"/><path d="M1307.1 1357.6V1375.7"/>
<path d="M1473.4 1276.8L1477.9 1294.9"/><path d="M1482.9 1317.2V1335.3"/><path d="M1482.9 1357.6V1375.7"/>
</g></svg>
</div>
<script>
(function(){
var cells=document.querySelectorAll('.n,.c,.v');
var S=2.73852;
cells.forEach(function(c){
 var sp=c.querySelectorAll('span'),m=0;
 sp.forEach(function(e){m=Math.max(m,e.getBoundingClientRect().width);});
 if(!m)return;
 var cw=c.getBoundingClientRect().width;
 var f=(cw-8*S)/m;
 if(f<0.5)f=0.5;if(f>1.7)f=1.7;
 sp.forEach(function(e){e.style.transform='scaleX('+f+')';});
});
})();
</script>
</body></html>
